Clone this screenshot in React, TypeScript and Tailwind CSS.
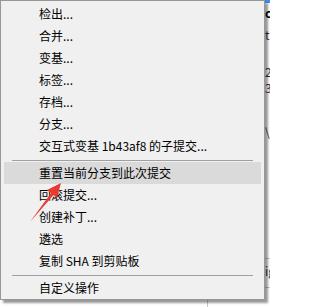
const groups: string[][] = [
  ["检出...", "合并...", "变基...", "标签...", "存档...", "分支...", "交互式变基 1b43af8 的子提交..."],
  ["重置当前分支到此次提交", "回滚提交...", "创建补丁...", "遴选", "复制 SHA 到剪贴板"],
  ["自定义操作"],
];

const HIGHLIGHTED = "重置当前分支到此次提交";

function MenuItem({ label }: { label: string }) {
  const active = label === HIGHLIGHTED;
  return (
    <div
      className={`h-[22px] flex items-center pl-[35px] text-[12px] leading-none text-black whitespace-nowrap ${
        active ? "bg-[#dadada]" : ""
      }`}
    >
      {label}
    </div>
  );
}

function Separator() {
  return (
    <div className="pt-[3px] pb-[1px] px-[8px]">
      <div className="h-px bg-[#a0a0a0]" />
    </div>
  );
}

// red annotation arrow drawn over the screenshot
function Arrow() {
  return (
    <svg
      className="absolute left-0 top-0 z-20 pointer-events-none"
      width="270"
      height="307"
      viewBox="0 0 270 307"
    >
      <polygon points="30,222 51,193 47,190 61,183 57,198 53.5,195" fill="#e83a30" />
    </svg>
  );
}

// sliver of the window behind the menu
function BehindStrip() {
  return (
    <div className="flex-1 flex flex-col overflow-hidden text-[12px] leading-none text-[#334]">
      <div className="h-[3px] bg-[#3d8ee6]" />
      <div className="h-[16px] flex items-end font-bold text-black">cd</div>
      <div className="h-[22px] flex items-end">t</div>
      <div className="h-[37px] flex items-end">2</div>
      <div className="h-[16px] flex items-end">3</div>
      <div className="h-[44px] flex items-end">\</div>
      <div className="h-[121px] border-b border-[#c8c8c8]" />
      <div className="h-[18px] flex items-end text-[#1a3a6a]">ig</div>
      <div className="h-[11px] border-b border-[#c8c8c8]" />
    </div>
  );
}

export default function App() {
  return (
    <div
      className="relative w-[270px] h-[307px] bg-white overflow-hidden flex"
      style={{ fontFamily: '"Noto Sans CJK SC", "Noto Sans", sans-serif' }}
    >
      <div className="w-[265px] flex flex-col">
        <div className="relative z-10 bg-[#f0f0f0] border border-[#979797] pt-[2px] px-[3px] shadow-[3px_3px_2px_rgba(0,0,0,0.4)]">
          {groups.map((items, gi) => (
            <div key={gi}>
              {gi > 0 && <Separator />}
              {items.map((label) => (
                <MenuItem key={label} label={label} />
              ))}
            </div>
          ))}
        </div>
        <div className="flex-1 pl-[207px]">
          <div className="w-px h-full bg-[#c8c8c8]" />
        </div>
      </div>
      <BehindStrip />
      <Arrow />
    </div>
  );
}
